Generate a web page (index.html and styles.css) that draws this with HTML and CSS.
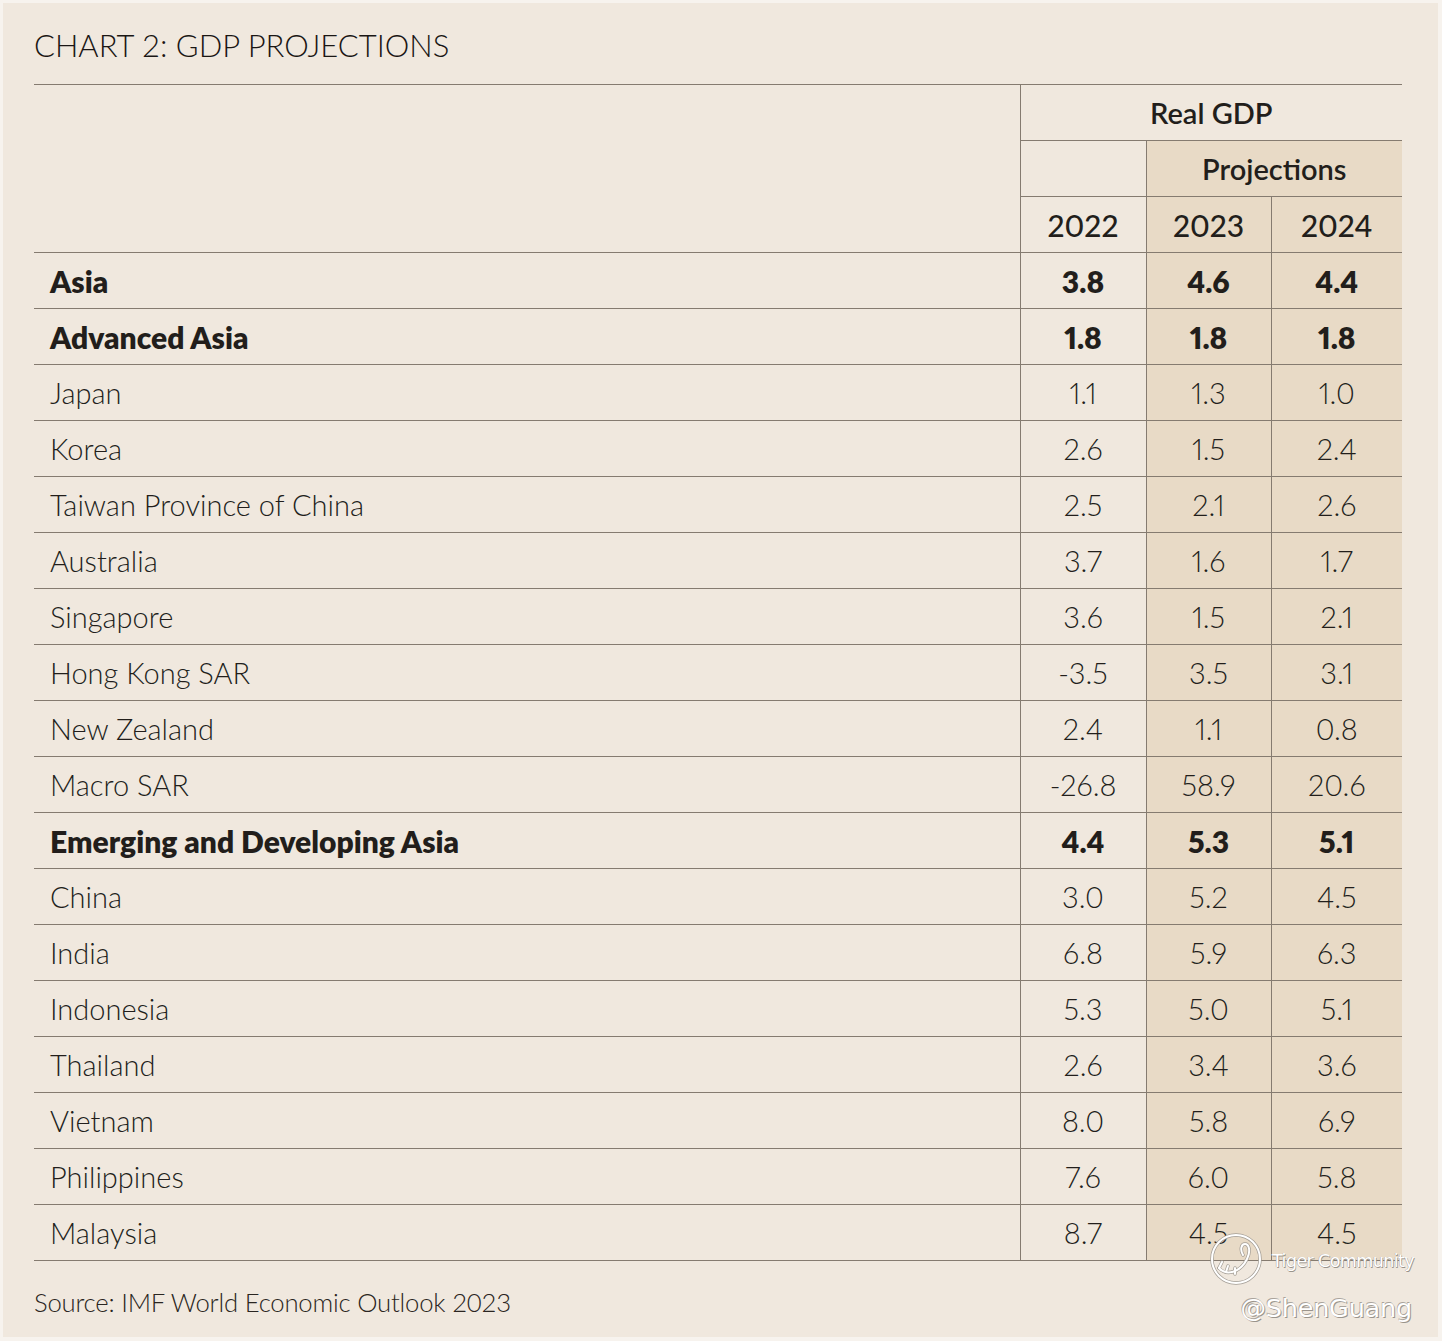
FILE: index.html
```html
<!DOCTYPE html>
<html lang="en">
<head>
<meta charset="utf-8">
<title>Chart 2: GDP Projections</title>
<link rel="stylesheet" href="styles.css">
</head>
<body>
<div class="panel">
  <h1 class="title">CHART 2: GDP PROJECTIONS</h1>
  <table class="gdp">
    <colgroup>
      <col class="c-label">
      <col class="c-y1">
      <col class="c-y2">
      <col class="c-y3">
    </colgroup>
    <thead>
      <tr>
        <th class="blank" rowspan="3"></th>
        <th class="group" colspan="3">Real GDP</th>
      </tr>
      <tr>
        <th class="empty"></th>
        <th class="group proj" colspan="2">Projections</th>
      </tr>
      <tr class="years">
        <th>2022</th>
        <th class="proj">2023</th>
        <th class="proj">2024</th>
      </tr>
    </thead>
    <tbody>
      <tr class="strong"><td>Asia</td><td>3.8</td><td class="proj">4.6</td><td class="proj">4.4</td></tr>
      <tr class="strong"><td>Advanced Asia</td><td>1.8</td><td class="proj">1.8</td><td class="proj">1.8</td></tr>
      <tr><td>Japan</td><td>1.1</td><td class="proj">1.3</td><td class="proj">1.0</td></tr>
      <tr><td>Korea</td><td>2.6</td><td class="proj">1.5</td><td class="proj">2.4</td></tr>
      <tr><td>Taiwan Province of China</td><td>2.5</td><td class="proj">2.1</td><td class="proj">2.6</td></tr>
      <tr><td>Australia</td><td>3.7</td><td class="proj">1.6</td><td class="proj">1.7</td></tr>
      <tr><td>Singapore</td><td>3.6</td><td class="proj">1.5</td><td class="proj">2.1</td></tr>
      <tr><td>Hong Kong SAR</td><td>-3.5</td><td class="proj">3.5</td><td class="proj">3.1</td></tr>
      <tr><td>New Zealand</td><td>2.4</td><td class="proj">1.1</td><td class="proj">0.8</td></tr>
      <tr><td>Macro SAR</td><td>-26.8</td><td class="proj">58.9</td><td class="proj">20.6</td></tr>
      <tr class="strong"><td>Emerging and Developing Asia</td><td>4.4</td><td class="proj">5.3</td><td class="proj">5.1</td></tr>
      <tr><td>China</td><td>3.0</td><td class="proj">5.2</td><td class="proj">4.5</td></tr>
      <tr><td>India</td><td>6.8</td><td class="proj">5.9</td><td class="proj">6.3</td></tr>
      <tr><td>Indonesia</td><td>5.3</td><td class="proj">5.0</td><td class="proj">5.1</td></tr>
      <tr><td>Thailand</td><td>2.6</td><td class="proj">3.4</td><td class="proj">3.6</td></tr>
      <tr><td>Vietnam</td><td>8.0</td><td class="proj">5.8</td><td class="proj">6.9</td></tr>
      <tr><td>Philippines</td><td>7.6</td><td class="proj">6.0</td><td class="proj">5.8</td></tr>
      <tr><td>Malaysia</td><td>8.7</td><td class="proj">4.5</td><td class="proj">4.5</td></tr>
    </tbody>
  </table>
  <p class="source">Source: IMF World Economic Outlook 2023</p>

  <div class="watermark">
    <div class="wm-line">
      <svg class="wm-logo" width="56" height="56" viewBox="0 0 56 56" aria-hidden="true">
        <g fill="none" stroke="#a29c94" stroke-width="3.4" stroke-linecap="round">
          <circle cx="28" cy="28" r="24"/>
          <path d="M11 37 C18 45 32 42 39 28 C43 20 41 13 37 13 C33 13 32 19 35 24"/>
          <path d="M14 31 l-3 6 M20 35 l-2 6 M27 37 l0 6"/>
        </g>
        <g fill="none" stroke="#ffffff" stroke-width="2" stroke-linecap="round">
          <circle cx="28" cy="28" r="24"/>
          <path d="M11 37 C18 45 32 42 39 28 C43 20 41 13 37 13 C33 13 32 19 35 24"/>
          <path d="M14 31 l-3 6 M20 35 l-2 6 M27 37 l0 6"/>
        </g>
      </svg>
      <span class="wm-small">Tiger Community</span>
    </div>
    <div class="wm-big">@ShenGuang</div>
  </div>
</div>
</body>
</html>
```

FILE: styles.css
```css
html, body {
  margin: 0;
  padding: 0;
}

body {
  background: #f7f3ee;
  font-family: "Lato", "Liberation Sans", sans-serif;
  color: #221e1b;
}

.panel {
  position: relative;
  margin: 3px 4px 4px 3px;
  height: 1334px;
  background: #f0e8de;
  padding: 0 36px 0 31px;
  box-sizing: border-box;
}

.title {
  margin: 0;
  padding-top: 24px;
  height: 81px;
  box-sizing: border-box;
  font-size: 31px;
  font-weight: 300;
  line-height: 36px;
  letter-spacing: 0;
  color: #1a1614;
}

.gdp {
  width: 1368px;
  border-collapse: collapse;
  table-layout: fixed;
}

.c-label { width: 986px; }
.c-y1 { width: 126px; }
.c-y2 { width: 125px; }
.c-y3 { width: 131px; }

.gdp th,
.gdp td {
  height: 55px;
  padding: 0;
  border-top: 1px solid #857b70;
  border-bottom: 1px solid #857b70;
  font-size: 29px;
  line-height: 30px;
  text-align: center;
  vertical-align: middle;
  font-variant-numeric: proportional-nums;
}

.gdp th:not(.blank),
.gdp td:not(:first-child) {
  border-left: 1px solid #857b70;
}

.gdp th.group {
  font-weight: 600;
  font-size: 29px;
}

.years th {
  font-weight: 500;
  font-size: 30px;
}

.gdp td {
  font-weight: 300;
}

.gdp td:first-child {
  text-align: left;
  padding-left: 16px;
}

.gdp tr.strong td {
  font-weight: 800;
  font-size: 30px;
}

.proj {
  background: #e8dac6;
}

.source {
  margin: 0;
  padding-top: 25px;
  font-size: 25.7px;
  font-weight: 300;
  line-height: 32px;
  letter-spacing: -0.2px;
  color: #2a2521;
}

.watermark {
  position: absolute;
  right: 26px;
  bottom: 14px;
  display: flex;
  flex-direction: column;
  align-items: flex-end;
  gap: 6px;
  pointer-events: none;
}

.wm-line {
  display: flex;
  align-items: center;
  gap: 8px;
  margin-right: -2px;
}

.wm-logo {
  display: block;
}

.wm-small {
  font-family: "DejaVu Sans", sans-serif;
  font-size: 17.5px;
  color: #ffffff;
  letter-spacing: -0.6px;
  text-shadow: 0.7px 0.7px 0 #9a948c, -0.5px -0.5px 0 #aaa49c;
  margin-top: 4px;
}

.wm-big {
  font-family: "DejaVu Sans", sans-serif;
  font-size: 25.5px;
  color: #ffffff;
  letter-spacing: -0.2px;
  text-shadow: 1px 1px 0 #9a948c, -0.6px -0.6px 0 #aaa49c;
}
```
